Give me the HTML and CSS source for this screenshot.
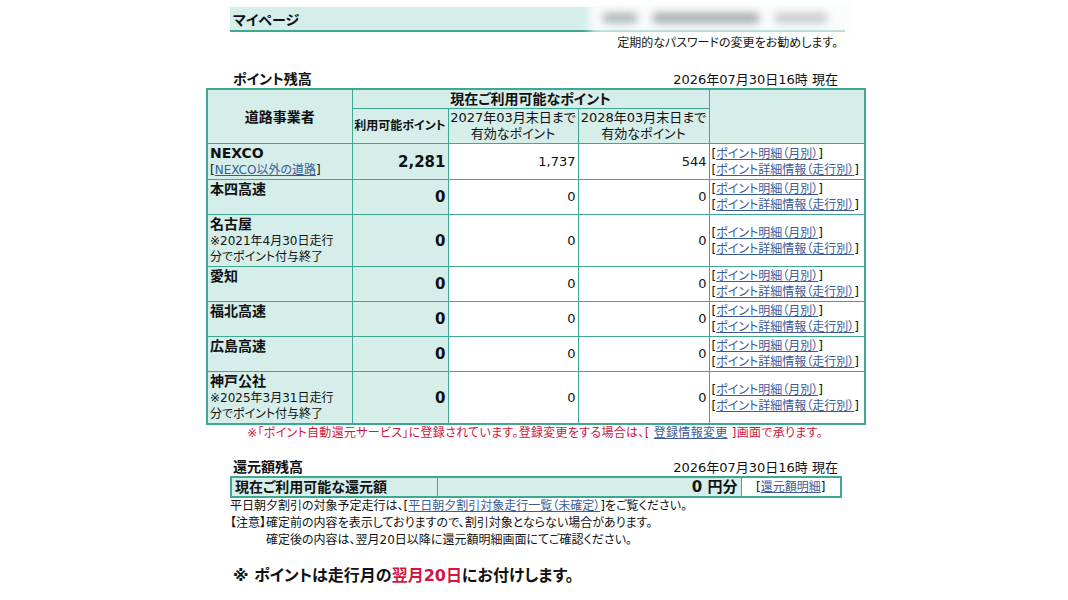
FILE: index.html
```html
<!DOCTYPE html>
<html lang="ja">
<head>
<meta charset="utf-8">
<title>マイページ</title>
<link rel="stylesheet" href="styles.css">
</head>
<body>
<div class="wrap">
  <div class="titlebar">
    <span class="title">マイページ</span>
    <div class="blurname">
      <span class="smudge m1"></span><span class="smudge m2"></span><span class="smudge m3"></span>
    </div>
  </div>
  <div class="pwnote">定期的なパスワードの変更をお勧めします。</div>

  <div class="sechead"><span class="h">ポイント残高</span><span class="date">2026年07月30日16時 現在</span></div>

  <table class="pt">
    <colgroup><col class="c1"><col class="c2"><col class="c3"><col class="c4"><col class="c5"></colgroup>
    <tr>
      <th rowspan="2" class="hd big">道路事業者</th>
      <th colspan="3" class="hd big">現在ご利用可能なポイント</th>
      <th rowspan="2" class="hd"></th>
    </tr>
    <tr>
      <th class="hd sm12">利用可能ポイント</th>
      <th class="hd reg">2027年03月末日まで<br>有効なポイント</th>
      <th class="hd reg">2028年03月末日まで<br>有効なポイント</th>
    </tr>
    <tr>
      <td class="name"><span class="nm">NEXCO</span><br><span class="lk">[<a href="#">NEXCO以外の道路</a>]</span></td>
      <td class="pts">2,281</td><td class="num">1,737</td><td class="num">544</td>
      <td class="links">[<a href="#">ポイント明細（月別）</a>]<br>[<a href="#">ポイント詳細情報（走行別）</a>]</td>
    </tr>
    <tr>
      <td class="name"><span class="nm">本四高速</span></td>
      <td class="pts">0</td><td class="num">0</td><td class="num">0</td>
      <td class="links">[<a href="#">ポイント明細（月別）</a>]<br>[<a href="#">ポイント詳細情報（走行別）</a>]</td>
    </tr>
    <tr>
      <td class="name"><span class="nm">名古屋</span><br><span class="ns">※2021年4月30日走行<br>分でポイント付与終了</span></td>
      <td class="pts">0</td><td class="num">0</td><td class="num">0</td>
      <td class="links">[<a href="#">ポイント明細（月別）</a>]<br>[<a href="#">ポイント詳細情報（走行別）</a>]</td>
    </tr>
    <tr>
      <td class="name"><span class="nm">愛知</span></td>
      <td class="pts">0</td><td class="num">0</td><td class="num">0</td>
      <td class="links">[<a href="#">ポイント明細（月別）</a>]<br>[<a href="#">ポイント詳細情報（走行別）</a>]</td>
    </tr>
    <tr>
      <td class="name"><span class="nm">福北高速</span></td>
      <td class="pts">0</td><td class="num">0</td><td class="num">0</td>
      <td class="links">[<a href="#">ポイント明細（月別）</a>]<br>[<a href="#">ポイント詳細情報（走行別）</a>]</td>
    </tr>
    <tr>
      <td class="name"><span class="nm">広島高速</span></td>
      <td class="pts">0</td><td class="num">0</td><td class="num">0</td>
      <td class="links">[<a href="#">ポイント明細（月別）</a>]<br>[<a href="#">ポイント詳細情報（走行別）</a>]</td>
    </tr>
    <tr>
      <td class="name"><span class="nm">神戸公社</span><br><span class="ns">※2025年3月31日走行<br>分でポイント付与終了</span></td>
      <td class="pts">0</td><td class="num">0</td><td class="num">0</td>
      <td class="links">[<a href="#">ポイント明細（月別）</a>]<br>[<a href="#">ポイント詳細情報（走行別）</a>]</td>
    </tr>
  </table>
  <div class="rednote">※「ポイント自動還元サービス」に登録されています。登録変更をする場合は、[ <a href="#">登録情報変更</a> ]画面で承ります。</div>

  <div class="sechead second"><span class="h">還元額残高</span><span class="date">2026年07月30日16時 現在</span></div>
  <table class="rt">
    <colgroup><col class="r1"><col class="r2"><col class="r3"></colgroup>
    <tr>
      <td class="rl">現在ご利用可能な還元額</td>
      <td class="ra">0 円分</td>
      <td class="rk">[<a href="#">還元額明細</a>]</td>
    </tr>
  </table>
  <div class="line">平日朝夕割引の対象予定走行は、[<a href="#">平日朝夕割引対象走行一覧（未確定）</a>]をご覧ください。</div>
  <div class="line">【注意】確定前の内容を表示しておりますので、割引対象とならない場合があります。</div>
  <div class="line ind">確定後の内容は、翌月20日以降に還元額明細画面にてご確認ください。</div>

  <div class="final">※ ポイントは走行月の<span class="em">翌月20日</span>にお付けします。</div>
</div>
</body>
</html>
```
FILE: styles.css
```css
body {
  margin: 0;
  background: #fff;
  color: #111;
  font-family: "DejaVu Sans", "Noto Sans CJK JP", sans-serif;
  font-size: 12px;
  font-feature-settings: "palt";
}
a { color: #3a5b98; text-decoration: underline; }
.wrap {
  width: 610px;
  margin-left: 230px;
  padding-top: 7px;
}
.titlebar {
  position: relative;
  width: 615px;
  height: 23px;
  background: #d5eeea;
  border-bottom: 2px solid #3fa892;
  display: flex;
  align-items: center;
}
.title {
  font-size: 14px;
  font-weight: bold;
  padding-left: 3px;
}
.blurname {
  position: absolute;
  left: 360px;
  top: -5px;
  width: 262px;
  height: 31px;
  background: #fbfdfd;
  filter: blur(4px);
  display: flex;
  align-items: center;
  gap: 14px;
  padding-left: 12px;
  box-sizing: border-box;
}
.smudge { display: block; height: 10px; border-radius: 5px; background: #a9b3b3; }
.m1 { width: 36px; }
.m2 { width: 108px; background: #9ea8a9; }
.m3 { width: 54px; background: #c3c8c8; }
.pwnote {
  margin-top: 3px;
  text-align: right;
  padding-right: 2px;
  line-height: 16px;
  font-size: 12px;
}
.sechead {
  margin-top: 17px;
  height: 20px;
  display: flex;
  justify-content: space-between;
  align-items: center;
  padding: 0 2px 0 3px;
}
.sechead.second { margin-top: 15px; }
.h { font-size: 14px; font-weight: bold; }
.date { font-size: 13px; }
.pt {
  margin-left: -24px;
  width: 658px;
  table-layout: fixed;
  border-collapse: collapse;
  border: 2px solid #3fa892;
}
.c1 { width: 145px; } .c2 { width: 96px; } .c3 { width: 130px; } .c4 { width: 131px; } .c5 { width: 156px; }
.pt th, .pt td {
  border: 1px solid #3fa892;
  padding: 1px 2px;
  line-height: 16px;
}
.pt th { white-space: nowrap; padding: 1px 0; }
.hd { background: #d5eeea; text-align: center; font-weight: bold; }
.big { font-size: 14px; line-height: 17px; }
.sm12 { font-size: 12px; }
.reg { font-size: 13px; font-weight: normal; }
.name {
  background: #d5eeea;
  vertical-align: top;
  padding-top: 2px;
}
.nm { font-size: 14px; font-weight: bold; line-height: 17px; }
.lk { font-size: 12px; }
.ns { font-size: 12px; }
.pts {
  background: #d5eeea;
  text-align: right;
  font-weight: bold;
  font-size: 15px;
  vertical-align: middle;
}
.num { text-align: right; font-size: 13px; vertical-align: middle; }
.links { font-size: 12px; vertical-align: middle; white-space: nowrap; }
.rednote {
  margin-left: -24px;
  width: 658px;
  text-align: center;
  color: #d2163f;
  line-height: 16px;
  font-size: 12px;
  letter-spacing: 0.3px;
}
.rednote a { color: #3a5b98; }
.rt {
  width: 610px;
  table-layout: fixed;
  border-collapse: collapse;
  border: 2px solid #3fa892;
}
.r1 { width: 206px; } .r2 { width: 304px; } .r3 { width: 100px; }
.rt td { border: 1px solid #3fa892; padding: 0 3px; line-height: 18px; white-space: nowrap; }
.rl { background: #d5eeea; font-weight: bold; font-size: 14px; }
.ra { background: #d5eeea; font-weight: bold; font-size: 15px; text-align: right; }
.rk { text-align: center; font-size: 12px; }
.line { line-height: 17px; font-size: 12px; }
.line.ind { padding-left: 36px; line-height: 16px; }
.final {
  margin-top: 17px;
  padding-left: 3px;
  font-size: 16px;
  font-weight: bold;
  line-height: 22px;
}
.em { color: #d2163f; }
```
